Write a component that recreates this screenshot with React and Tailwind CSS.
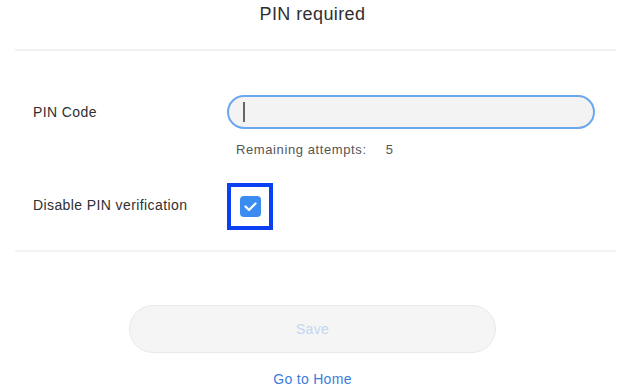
export default function App() {
  return (
    <div className="w-[631px] h-[391px] overflow-hidden bg-white text-[#2f2f2f] font-['Liberation_Sans',Arial,sans-serif]">
      {/* Header */}
      <div className="w-[625px] h-[49px] pt-[3px] text-center text-[18px] leading-[22px] tracking-[0.4px]">
        PIN required
      </div>
      <div className="mx-[15px] h-[2px] bg-[#f1f1f1]" />

      {/* PIN Code */}
      <div className="mt-[44px] flex items-center pl-[33px]">
        <label className="w-[194px] text-[14px] tracking-[0.4px]">PIN Code</label>
        <div className="w-[368px] h-[34px] rounded-full border-2 border-[#6ba7ee] bg-[#f3f3f3] flex items-center pl-[14px]">
          <span className="w-[2px] h-[20px] bg-[#666]" />
        </div>
      </div>
      <div className="mt-[13px] pl-[236px] flex text-[13px] leading-4 tracking-[0.6px] text-[#555]">
        <span>Remaining attempts:</span>
        <span className="ml-[19px]">5</span>
      </div>

      {/* Disable PIN */}
      <div className="mt-[25px] flex items-center pl-[33px]">
        <label className="w-[194px] pb-[3px] text-[14px] tracking-[0.4px]">Disable PIN verification</label>
        <div className="w-[46px] h-[47px] border-4 border-[#0a40f2] flex items-center justify-center">
          <div className="w-[21px] h-[21px] rounded-[4px] bg-[#3b8cf0] flex items-center justify-center">
            <svg width="21" height="21" viewBox="0 0 21 21" fill="none">
              <polyline points="5.5,10.5 9,14 15.5,7.5" stroke="white" strokeWidth="2.2" strokeLinecap="round" strokeLinejoin="round" />
            </svg>
          </div>
        </div>
      </div>
      <div className="mt-[20px] mx-[15px] h-[2px] bg-[#f3f3f3]" />

      {/* Actions */}
      <div className="w-[625px] flex flex-col items-center">
        <button className="mt-[53px] w-[367px] h-[48px] rounded-full bg-[#f5f5f5] border border-[#e9e9e9] text-[14px] tracking-[0.3px] text-[#c3d6f2]">
          Save
        </button>
        <a className="mt-[18px] text-[14px] leading-4 tracking-[0.3px] text-[#3b7ddd]">Go to Home</a>
      </div>
    </div>
  );
}
